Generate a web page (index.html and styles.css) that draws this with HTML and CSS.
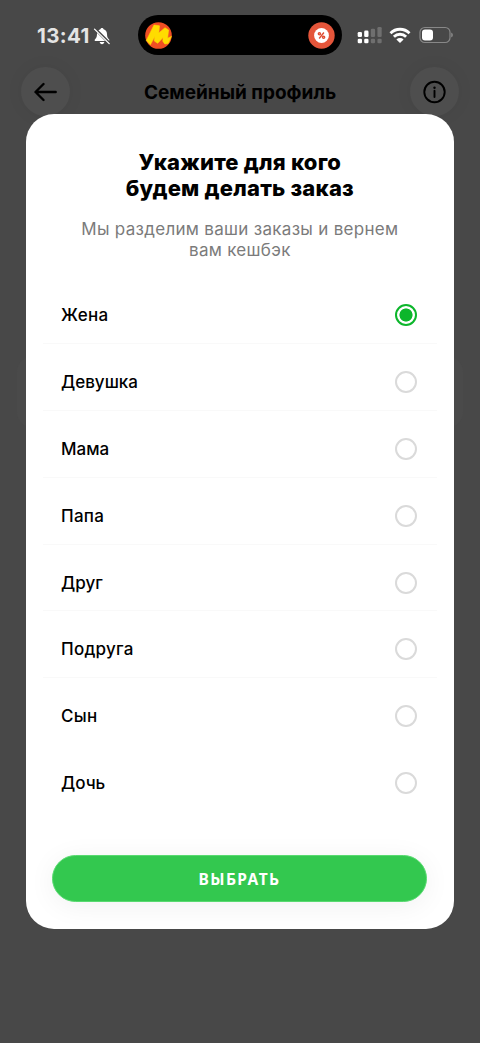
FILE: index.html
```html
<!DOCTYPE html>
<html lang="ru">
<head>
<meta charset="utf-8">
<title>Семейный профиль</title>
<link rel="stylesheet" href="styles.css">
</head>
<body>
<div class="screen">
  <div class="status">
    <div class="clock"><span class="time">13:41</span>
      <svg class="bell" width="18" height="18" viewBox="0 0 18 18"><path d="M9 1c-.9 0-1.500.6-1.600 1.300C5.200 3 4.100 4.700 4 7c-.1 3-.6 4-1.900 5.200-.8.800-.5 1.800.5 1.800h12.800c1 0 1.300-1 .5-1.800C14.600 11 14.100 10 14 7c-.1-2.300-1.200-4-3.400-4.700C10.500 1.600 9.900 1 9 1zM6.700 15c.2 1.300 1.100 2.200 2.300 2.200s2.100-.9 2.300-2.200z" fill="#fff"/><path d="M1.900 1.700l14.800 14.800" stroke="#484848" stroke-width="3"/><path d="M1.500 2.100l14.700 14.500" stroke="#fff" stroke-width="1.300" stroke-linecap="round"/></svg>
    </div>
    <div class="island">
      <svg width="27" height="27" viewBox="0 0 27 27"><circle cx="13.500" cy="13.500" r="13.300" fill="#f04e23"/><path d="M1.300 18.500L9 3l5.500.8L13.800 11l6.200-5.300 3.600 2.300-1 8.300 3.900-2-3.300 7.200-3.400.5-2-2.800.3-3.700-5.400 5.800-3.400-2.300.5-4.500-4.400 8.200z" fill="#ffdc00" stroke="#ffdc00" stroke-width=".6" stroke-linejoin="round"/></svg>
      <svg width="27" height="27" viewBox="0 0 27 27"><circle cx="13.500" cy="13.500" r="13.200" fill="#e4553a"/><circle cx="13.500" cy="13.500" r="7.400" fill="#fff"/><g fill="none" stroke="#df4c32" stroke-width="1.400"><path d="M15.900 10.500l-4.700 6"/><circle cx="11.400" cy="11.800" r="1.100"/><circle cx="15.600" cy="15.300" r="1.100"/></g></svg>
    </div>
    <div class="signals">
      <svg width="26" height="18" viewBox="0 0 26 18"><g fill="#fff"><rect x=".7" y="6" width="4.300" height="5" rx="1.300"/><rect x="7.200" y="4.600" width="4.300" height="6.400" rx="1.300"/><rect x=".7" y="12.800" width="4.300" height="4.400" rx="1.300"/><rect x="7.200" y="12.800" width="4.300" height="4.400" rx="1.300"/></g><g fill="#6f6f6f"><rect x="13.800" y="2.800" width="4.300" height="8.200" rx="1.300"/><rect x="20.400" y="1" width="4.300" height="10" rx="1.300"/><rect x="13.800" y="12.800" width="4.300" height="4.400" rx="1.300"/><rect x="20.400" y="12.800" width="4.300" height="4.400" rx="1.300"/></g></svg>
      <svg class="wifi" width="22" height="17" viewBox="0 0 22 17"><g fill="none" stroke="#fff" stroke-width="2.800"><path d="M1.500 6.200a13.400 13.400 0 0 1 19 0"/><path d="M4.900 9.800a8.600 8.600 0 0 1 12.200 0"/></g><path d="M7.400 12.400a5.100 5.100 0 0 1 7.200 0L11 16z" fill="#fff"/></svg>
      <svg width="36" height="18" viewBox="0 0 36 18"><rect x="1" y="1.500" width="30" height="15" rx="4.800" fill="none" stroke="#888" stroke-width="1.200"/><rect x="3" y="3.500" width="11" height="11" rx="3" fill="#fff"/><path d="M32.200 6.600q1.700.8 1.700 2.400t-1.700 2.400z" fill="#888"/></svg>
    </div>
  </div>
  <header class="header">
    <div class="round"><svg width="24" height="20" viewBox="0 0 24 20"><path d="M21.700 10H1.700M9.500 2l-8 8 8 8" fill="none" stroke="#000" stroke-width="2.400" stroke-linecap="round" stroke-linejoin="round"/></svg></div>
    <div class="heading">Семейный профиль</div>
    <div class="round"><svg width="24" height="24" viewBox="0 0 24 24"><circle cx="11.500" cy="12" r="10.200" fill="none" stroke="#000" stroke-width="1.900"/><circle cx="11.500" cy="7.700" r="1.200"/><path d="M11.500 10.700v6.300" stroke="#000" stroke-width="1.900" stroke-linecap="round"/></svg></div>
  </header>
  <section class="under-card"></section>
  <main class="modal">
    <h1 class="title">Укажите для кого<br>будем делать заказ</h1>
    <p class="subtitle">Мы разделим ваши заказы и вернем<br>вам кешбэк</p>
    <ul class="options">
      <li class="option"><span class="wide">Жена</span><i class="radio on"></i></li>
      <li class="option"><span>Девушка</span><i class="radio"></i></li>
      <li class="option"><span>Мама</span><i class="radio"></i></li>
      <li class="option"><span class="wide">Папа</span><i class="radio"></i></li>
      <li class="option"><span>Друг</span><i class="radio"></i></li>
      <li class="option"><span class="wide">Подруга</span><i class="radio"></i></li>
      <li class="option"><span class="wide">Сын</span><i class="radio"></i></li>
      <li class="option"><span>Дочь</span><i class="radio"></i></li>
    </ul>
    <button class="choose">ВЫБРАТЬ</button>
  </main>
</div>
</body>
</html>
```
FILE: styles.css
```css
* { box-sizing: border-box; }
body { margin: 0; background: #484848; font-family: Inter, "Noto Sans", sans-serif; color: #000; }
.screen { position: relative; width: 480px; height: 1043px; overflow: hidden; background: #484848; }
svg { display: block; flex: none; }
.status { display: grid; grid-template-columns: 138px 204px 1fr; height: 67px; padding-top: 15px; }
.clock { display: flex; align-items: center; height: 41px; padding-left: 37px; }
.time { width: 56px; font-size: 20.500px; font-weight: 650; color: #e4e4e4; letter-spacing: .4px; white-space: nowrap; }
.island { display: flex; align-items: center; justify-content: space-between; height: 40px; padding: 0 7px; border-radius: 20px; background: #000; }
.signals { display: flex; align-items: center; height: 40px; padding-left: 15px; }
.wifi { margin: 0 8px 0 6px; }
.header { display: flex; align-items: center; justify-content: space-between; height: 49px; padding: 0 21px; }
.round { display: flex; align-items: center; justify-content: center; width: 49px; height: 49px; border-radius: 50%; background: #4e4e4e; box-shadow: 0 0 18px rgba(0, 0, 0, .05); }
.heading { padding-top: 2px; font-size: 19px; font-weight: 700; white-space: nowrap; }
.under-card { height: 72px; margin: 240px 17px 0; border-radius: 16px; background: #4a4a4a; }
.modal { position: absolute; left: 26px; top: 113.5px; width: 427.700px; height: 815.500px; padding: 35.500px 17px 0; border-radius: 28px; background: #fff; display: flex; flex-direction: column; overflow: hidden; }
.title { margin: 0; text-align: center; font-size: 22px; line-height: 26px; font-weight: 850; letter-spacing: .2px; white-space: nowrap; }
.subtitle { margin: 18px 0 0; text-align: center; font-size: 17px; line-height: 21px; font-weight: 430; letter-spacing: .3px; color: #7b7b7b; white-space: nowrap; }
.options { list-style: none; margin: 16px 0 0; padding: 0; }
.option { display: flex; align-items: center; justify-content: space-between; height: 66.900px; padding: 10px 20px 0 18px; border-bottom: 1px solid #f9f9f9; font-size: 17px; font-weight: 500; }
.option:nth-last-child(-n+2) { border-color: transparent; }
.wide { letter-spacing: .25px; }
.radio { width: 22px; height: 22px; border: 2px solid #dadada; border-radius: 50%; }
.radio.on { border-color: #0cb62b; background: radial-gradient(circle, #0cb62b 6.200px, #fff 6.900px); }
.choose { width: 375px; height: 47px; flex: none; margin: 43px 0 0 9px; border: 1px solid #58da70; border-radius: 24px; background: #33c84f; color: #fff; font-family: "Noto Sans", "Open Sans", sans-serif; font-size: 15.500px; font-weight: 700; letter-spacing: 1.400px; padding: 0; box-shadow: 0 4px 28px rgba(0, 0, 0, .06); }
```
